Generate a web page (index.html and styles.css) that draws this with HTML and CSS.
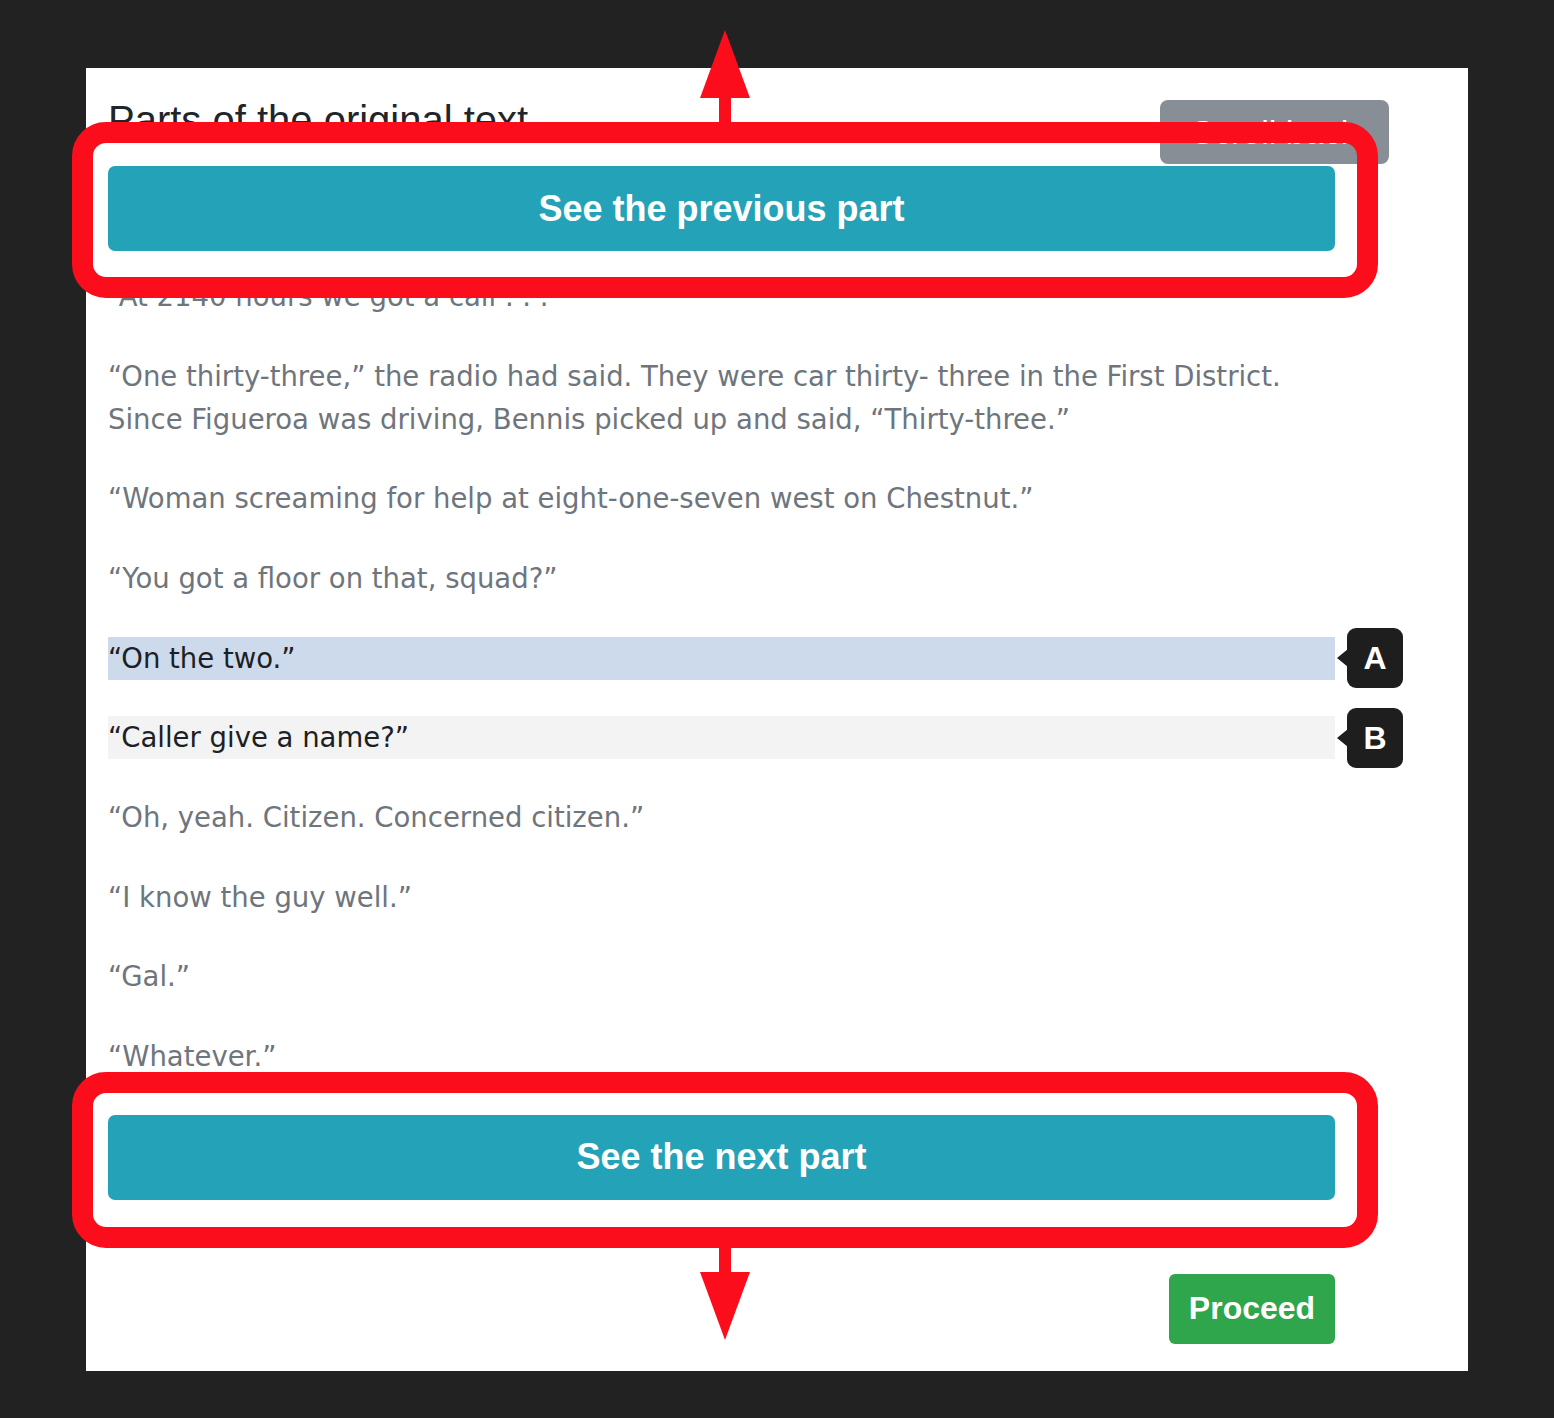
FILE: index.html
```html
<!DOCTYPE html>
<html lang="en">
<head>
<meta charset="utf-8">
<title>Parts of the original text</title>
<link rel="stylesheet" href="styles.css">
</head>
<body>
<div class="stage">
  <section class="panel">
    <header class="panel-head">
      <h2 class="title">Parts of the original text</h2>
      <button class="btn btn-gray" type="button">Scroll back</button>
    </header>

    <div class="callout callout-top">
      <button class="btn btn-teal" type="button">See the previous part</button>
      <span class="frame"></span>
      <svg class="arrow arrow-up" width="52" height="92" viewBox="0 0 52 92" aria-hidden="true">
        <polygon points="26,0 51,68 1,68" fill="#fc0d1c"/>
        <rect x="20" y="66" width="12" height="26" fill="#fc0d1c"/>
      </svg>
    </div>

    <div class="story">
      <p>“At 2140 hours we got a call . . .</p>
      <p>“One thirty-three,” the radio had said. They were car thirty- three in the First District. Since Figueroa was driving, Bennis picked up and said, “Thirty-three.”</p>
      <p>“Woman screaming for help at eight-one-seven west on Chestnut.”</p>
      <p>“You got a floor on that, squad?”</p>
      <p class="hl hl-a">“On the two.”<span class="badge">A</span></p>
      <p class="hl hl-b">“Caller give a name?”<span class="badge">B</span></p>
      <p>“Oh, yeah. Citizen. Concerned citizen.”</p>
      <p>“I know the guy well.”</p>
      <p>“Gal.”</p>
      <p>“Whatever.”</p>
    </div>

    <div class="callout callout-bottom">
      <button class="btn btn-teal" type="button">See the next part</button>
      <span class="frame"></span>
      <svg class="arrow arrow-down" width="52" height="92" viewBox="0 0 52 92" aria-hidden="true">
        <rect x="20" y="0" width="12" height="26" fill="#fc0d1c"/>
        <polygon points="1,24 51,24 26,92" fill="#fc0d1c"/>
      </svg>
    </div>

    <div class="actions">
      <button class="btn btn-green" type="button">Proceed</button>
    </div>
  </section>
</div>
</body>
</html>
```

FILE: styles.css
```css
* {
  box-sizing: border-box;
}

html, body {
  margin: 0;
  padding: 0;
  background: #222222;
}

body {
  width: 1554px;
  height: 1418px;
  overflow: hidden;
  font-family: "DejaVu Sans", "Liberation Sans", sans-serif;
}

.stage {
  padding: 68px 0 0 86px;
}

.panel {
  width: 1382px;
  height: 1303px;
  background: #ffffff;
  padding: 32px 0 0 22px;
}

.panel-head {
  width: 1281px;
  height: 64px;
  display: flex;
  justify-content: space-between;
  align-items: flex-start;
}

.title {
  margin: 0;
  font-family: "Liberation Sans", Arial, sans-serif;
  font-weight: normal;
  font-size: 40px;
  line-height: 40px;
  color: #212529;
}

.btn {
  border: 0;
  margin: 0;
  padding: 0;
  color: #ffffff;
  font-family: "Liberation Sans", Arial, sans-serif;
  font-weight: bold;
  display: flex;
  align-items: center;
  justify-content: center;
}

.btn-gray {
  width: 229px;
  height: 64px;
  background: #878e95;
  border-radius: 8px;
  font-size: 34px;
  font-weight: normal;
}

.btn-teal {
  width: 1227px;
  height: 85px;
  background: #24a3b8;
  border-radius: 7px;
  font-size: 36px;
}

.btn-green {
  width: 166px;
  height: 70px;
  background: #2fa64b;
  border-radius: 6px;
  font-size: 32px;
}

.callout {
  position: relative;
  width: 1227px;
}

.callout-top {
  margin-top: 2px;
}

.frame {
  position: absolute;
  border: 21px solid #fc0d1c;
  border-radius: 34px;
  pointer-events: none;
  z-index: 3;
}

.callout-top .frame {
  top: -44px;
  left: -36px;
  right: -43px;
  bottom: -47px;
}

.callout-bottom .frame {
  top: -43px;
  left: -36px;
  right: -43px;
  bottom: -48px;
}

.arrow {
  position: absolute;
  left: calc(50% - 23px);
  z-index: 3;
}

.arrow-up {
  top: -136px;
}

.arrow-down {
  top: calc(100% + 48px);
}

.story {
  width: 1227px;
  margin-top: 24px;
  font-size: 27.5px;
  line-height: 43px;
  color: #6e757c;
}

.story p {
  margin: 0 0 36.67px;
}

.story .hl {
  position: relative;
  color: #1c1f23;
}

.hl-a {
  background: #cddaeb;
}

.hl-b {
  background: #f3f3f3;
}

.badge {
  position: absolute;
  left: calc(100% + 12px);
  top: 50%;
  transform: translateY(-50%);
  width: 56px;
  height: 60px;
  border-radius: 9px;
  background: #1e1e1e;
  color: #ffffff;
  font-family: "Liberation Sans", Arial, sans-serif;
  font-weight: bold;
  font-size: 32px;
  line-height: 60px;
  text-align: center;
}

.badge::before {
  content: "";
  position: absolute;
  left: -10px;
  top: 50%;
  margin-top: -9px;
  border-right: 11px solid #1e1e1e;
  border-top: 9px solid transparent;
  border-bottom: 9px solid transparent;
}

.actions {
  width: 1227px;
  margin-top: 74px;
  display: flex;
  justify-content: flex-end;
}
```
